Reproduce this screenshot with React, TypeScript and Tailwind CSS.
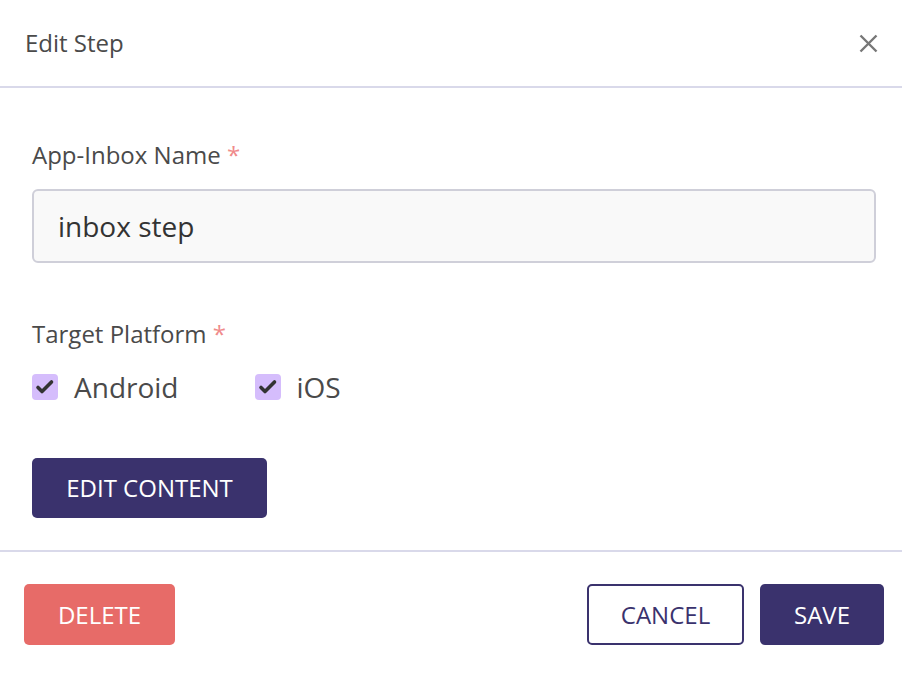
import React from "react";

const Check = () => (
  <span className="block h-[26px] w-[26px] rounded-[4px] bg-[#d5bdfc]">
    <svg width="26" height="26" viewBox="0 0 26 26">
      <path d="M6 13.5 L10 17.5 L19.5 8" fill="none" stroke="#333" strokeWidth="3.6" strokeLinecap="round" strokeLinejoin="round" />
    </svg>
  </span>
);

export default function App() {
  return (
    <div className="w-[902px] h-[698px] bg-white text-[#4a4a4a]" style={{ fontFamily: '"Open Sans", sans-serif' }}>
      <div className="flex h-[88px] items-center justify-between border-b-2 border-[#d9d9ea] pl-[25px] pr-[24px]">
        <div className="text-[24px]">Edit Step</div>
        <svg width="19" height="19" viewBox="0 0 19 19">
          <path d="M1.5 1.5 L17.5 17.5 M17.5 1.5 L1.5 17.5" stroke="#777" strokeWidth="2.4" />
        </svg>
      </div>
      <div className="pl-[32px] pr-[26px] pt-[52px]">
        <div className="text-[24px] leading-[30px]">
          App-Inbox Name <span className="text-[#f08b8b]">*</span>
        </div>
        <div className="mt-[19px] flex h-[74px] items-center rounded-[6px] border-2 border-[#cfcfd9] bg-[#f9f9f9] px-[24px] text-[28px] text-[#333]">
          inbox step
        </div>
        <div className="mt-[56px] text-[24px] leading-[30px]">
          Target Platform <span className="text-[#f08b8b]">*</span>
        </div>
        <div className="mt-[19px] flex h-[38px] items-center">
          <label className="flex items-center gap-[16px]">
            <Check />
            <span className="text-[28px]">Android</span>
          </label>
          <label className="ml-[76px] flex items-center gap-[16px]">
            <Check />
            <span className="text-[28px]">iOS</span>
          </label>
        </div>
        <button className="mt-[52px] flex h-[60px] w-[235px] items-center justify-center rounded-[5px] bg-[#3a326d] text-[24px] text-white">
          EDIT CONTENT
        </button>
      </div>
      <div className="mt-[32px] border-b-2 border-[#d9d9ea]" />
      <div className="flex items-center justify-between pt-[32px] pl-[24px] pr-[18px]">
        <button className="flex h-[61px] w-[151px] items-center justify-center rounded-[5px] bg-[#e76b68] text-[24px] text-white">
          DELETE
        </button>
        <div className="flex gap-[16px]">
          <button className="flex h-[61px] w-[157px] items-center justify-center rounded-[5px] border-2 border-[#3a326d] bg-white text-[24px] text-[#3a326d]">
            CANCEL
          </button>
          <button className="flex h-[61px] w-[124px] items-center justify-center rounded-[5px] bg-[#3a326d] text-[24px] text-white">
            SAVE
          </button>
        </div>
      </div>
    </div>
  );
}
